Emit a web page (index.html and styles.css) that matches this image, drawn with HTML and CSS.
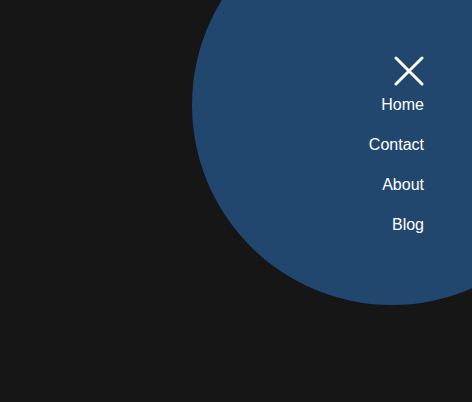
FILE: index.html
```html
<!DOCTYPE html>
<html lang="en">
<head>
  <meta charset="UTF-8">
  <meta name="viewport" content="width=device-width, initial-scale=1.0">
  <title>Menu</title>
  <link rel="stylesheet" href="styles.css">
</head>
<body>

  <div class="circle"></div>

  <nav class="menu">
    <button class="close" aria-label="Close menu">
      <svg width="30" height="30" viewBox="0 0 30 30">
        <path d="M2 2 L28 28 M28 2 L2 28" stroke="#fff" stroke-width="3" stroke-linecap="round" fill="none"/>
      </svg>
    </button>
    <ul class="links">
      <li><a href="#">Home</a></li>
      <li><a href="#">Contact</a></li>
      <li><a href="#">About</a></li>
      <li><a href="#">Blog</a></li>
    </ul>
  </nav>

</body>
</html>
```

FILE: styles.css
```css
html {
  overflow: hidden;
}

body {
  font-family: 'Liberation Sans', Arial, sans-serif;
  background: #161616;
  margin: 0;
  padding: 0;
  height: 100vh;
  overflow: hidden;
  position: relative;
}

.circle {
  position: absolute;
  left: 192px;
  top: -95px;
  width: 400px;
  height: 400px;
  border-radius: 50%;
  background: #22476e;
}

.menu {
  position: relative;
  display: flex;
  flex-direction: column;
  align-items: flex-end;
  padding: 56px 48px 0 0;
}

.close {
  background: none;
  border: none;
  padding: 0;
  width: 30px;
  height: 30px;
  cursor: pointer;
}

.close svg {
  display: block;
}

.links {
  list-style: none;
  margin: 9px 0 0;
  padding: 0;
  display: flex;
  flex-direction: column;
  align-items: flex-end;
  gap: 20px;
}

.links a {
  color: #fff;
  text-decoration: none;
  font-size: 16px;
  line-height: 20px;
  display: block;
}
```
